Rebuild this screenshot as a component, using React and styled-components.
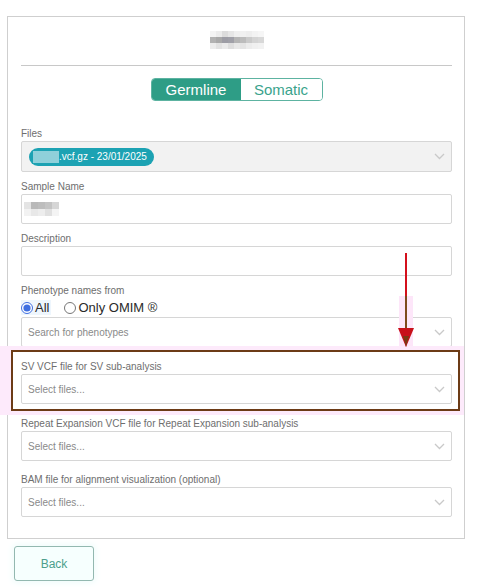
import styled, { createGlobalStyle } from "styled-components"

const GlobalStyle = createGlobalStyle`
  body {
    margin: 0;
    background: #ffffff;
    font-family: "Liberation Sans", Arial, sans-serif;
  }
`

const Page = styled.div`
  position: relative;
  width: 478px;
  height: 587px;
  overflow: hidden;
  padding: 16px 0 0 7px;
  box-sizing: border-box;
`
const Card = styled.div`
  width: 458px;
  box-sizing: border-box;
  border: 1px solid #cfcfcf;
  padding: 14px 12px 21px 13px;
`
const TitleRow = styled.div`
  display: flex;
  justify-content: center;
`
const Rule = styled.hr`
  border: 0;
  border-top: 1px solid #c8c8c8;
  margin: 16px 0 12px;
`
const ToggleRow = styled.div`
  display: flex;
  justify-content: center;
  margin-bottom: 26px;
`
const Toggle = styled.div`
  display: flex;
  border: 1px solid #5db3a1;
  border-radius: 4px;
  overflow: hidden;
  height: 23px;
  box-sizing: border-box;
`
const ToggleOption = styled.div`
  display: flex;
  align-items: center;
  justify-content: center;
  width: ${p => p.$w}px;
  font-size: 15px;
  color: ${p => (p.$active ? "#ffffff" : "#3aa38c")};
  background: ${p => (p.$active ? "#2e9d86" : "#ffffff")};
`
const Fields = styled.div`
  display: flex;
  flex-direction: column;
  gap: 8px;
`
const Group = styled.div`
  display: flex;
  flex-direction: column;
  margin-top: ${p => p.$extra || 0}px;
`
const Label = styled.div`
  font-size: 10px;
  line-height: 14px;
  color: #6e6e6e;
  height: 14px;
`
const Box = styled.div`
  display: flex;
  align-items: center;
  height: ${p => p.$h || 30}px;
  box-sizing: border-box;
  border: 1px solid #d6d6d6;
  border-radius: 2px;
  background: ${p => (p.$disabled ? "#f2f2f2" : "#ffffff")};
  padding: 0 6px 0 ${p => p.$pl || 6}px;
  gap: 6px;
`
const Placeholder = styled.span`
  flex: 1;
  font-size: 10px;
  color: #8a8a8a;
`
const Fill = styled.div`
  flex: 1;
  display: flex;
  align-items: center;
`
const Chip = styled.div`
  display: flex;
  align-items: center;
  height: 18px;
  border-radius: 9px;
  background: #1ca2b3;
  color: #ffffff;
  font-size: 10px;
  padding: 0 7px 0 4px;
`
const Redacted = styled.span`
  display: inline-block;
  width: ${p => p.$w}px;
  height: ${p => p.$h}px;
  background: ${p => p.$bg};
`
const RadioRow = styled.div`
  display: flex;
  align-items: center;
  height: 19px;
  font-size: 13px;
  color: #2a2a2a;
`
const RadioLabel = styled.label`
  display: flex;
  align-items: center;
  margin-right: 13px;
  background: ${p => (p.$hl ? "#eef6fd" : "transparent")};
  padding-right: 2px;
`
const Radio = styled.input`
  width: 12px;
  height: 12px;
  margin: 0 2px 0 0;
  accent-color: #3e6ee0;
`
const Highlight = styled.div`
  display: flex;
  flex-direction: column;
  margin: -5px -8px -2px -10px;
  padding: 8px 6px 5px 8px;
  border: 2px solid #6c3b16;
  box-shadow: 0 0 0 4px #fdeafb, -8px 0 0 4px #fdeafb;
`
const BackButton = styled.button`
  margin: 7px 0 0 7px;
  width: 80px;
  height: 35px;
  border: 1px solid #93b8b0;
  border-radius: 3px;
  background: #f6fffe;
  color: #4c9f8c;
  font-family: "Liberation Sans", Arial, sans-serif;
  font-size: 12px;
  box-shadow: 0 0 6px 2px #effcfb;
`
const ArrowLayer = styled.svg`
  position: absolute;
  left: 394px;
  top: 250px;
`

const Chevron = () => (
  <svg width="11" height="7" viewBox="0 0 11 7">
    <path d="M1 1 L5.5 5.5 L10 1" fill="none" stroke="#c9c9c9" strokeWidth="1.3" />
  </svg>
)

const Mosaic = ({ cells, size }) => (
  <svg width={cells[0].length * size} height={cells.length * size}>
    {cells.map((row, r) =>
      row.map((c, i) => <rect key={r + "-" + i} x={i * size} y={r * size} width={size} height={size} fill={c} />)
    )}
  </svg>
)

const titleCells = [
  ["#f4f4f4", "#ececec", "#dcdcdc", "#e6e6e6", "#efefef", "#f1f1f1", "#eeeeee", "#f3f3f3", "#f6f6f6"],
  ["#b2b2b2", "#a9a9a9", "#9d9da5", "#a0a0a8", "#b5b5b5", "#bcbcbc", "#cacaca", "#d4d4d4", "#d8d8d8"],
  ["#ececec", "#e2e2e2", "#eaeaea", "#dedede", "#e8e8e8", "#e4e4e4", "#ececec", "#f0f0f0", "#f2f2f2"],
]

const Select = ({ text }) => (
  <Box>
    <Placeholder>{text}</Placeholder>
    <Chevron />
  </Box>
)

const App = () => {
  return (
    <Page>
      <GlobalStyle />
      <Card>
        <TitleRow>
          <Mosaic cells={titleCells} size={6} />
        </TitleRow>
        <Rule />
        <ToggleRow>
          <Toggle>
            <ToggleOption $active $w={89}>Germline</ToggleOption>
            <ToggleOption $w={81}>Somatic</ToggleOption>
          </Toggle>
        </ToggleRow>
        <Fields>
          <Group>
            <Label>Files</Label>
            <Box $h={31} $disabled $pl={7}>
              <Fill>
                <Chip>
                  <Redacted $w={26} $h={12} $bg="#8fd0da" />
                  .vcf.gz - 23/01/2025
                </Chip>
              </Fill>
              <Chevron />
            </Box>
          </Group>
          <Group>
            <Label>Sample Name</Label>
            <Box $pl={2}>
              <Mosaic cells={[["#e4e4e4", "#b9b9b9", "#bdbdbd", "#c4c4c4", "#d6d6d6"], ["#f2f2f2", "#e8e8e8", "#ededed", "#e0e0e0", "#f4f4f4"]]} size={7} />
            </Box>
          </Group>
          <Group>
            <Label>Description</Label>
            <Box />
          </Group>
          <Group>
            <Label>Phenotype names from</Label>
            <RadioRow>
              <RadioLabel $hl>
                <Radio type="radio" name="pheno" defaultChecked />
                All
              </RadioLabel>
              <RadioLabel>
                <Radio type="radio" name="pheno" />
                Only OMIM ®
              </RadioLabel>
            </RadioRow>
            <Select text="Search for phenotypes" />
          </Group>
          <Highlight>
            <Label>SV VCF file for SV sub-analysis</Label>
            <Select text="Select files..." />
          </Highlight>
          <Group>
            <Label>Repeat Expansion VCF file for Repeat Expansion sub-analysis</Label>
            <Select text="Select files..." />
          </Group>
          <Group $extra={4}>
            <Label>BAM file for alignment visualization (optional)</Label>
            <Select text="Select files..." />
          </Group>
        </Fields>
      </Card>
      <BackButton>Back</BackButton>
      <ArrowLayer width="24" height="100" viewBox="0 0 24 100">
        <rect x="5" y="46" width="14" height="50" fill="#fde6f9" />
        <line x1="12" y1="3" x2="12" y2="46" stroke="#d4101c" strokeWidth="2" />
        <line x1="12" y1="46" x2="12" y2="80" stroke="#7e4a1c" strokeWidth="2" />
        <polygon points="4,78 20,78 12,97" fill="#c8101a" />
        <polygon points="9,86 15,86 12,97" fill="#7a3a14" />
      </ArrowLayer>
    </Page>
  )
}

export default App
